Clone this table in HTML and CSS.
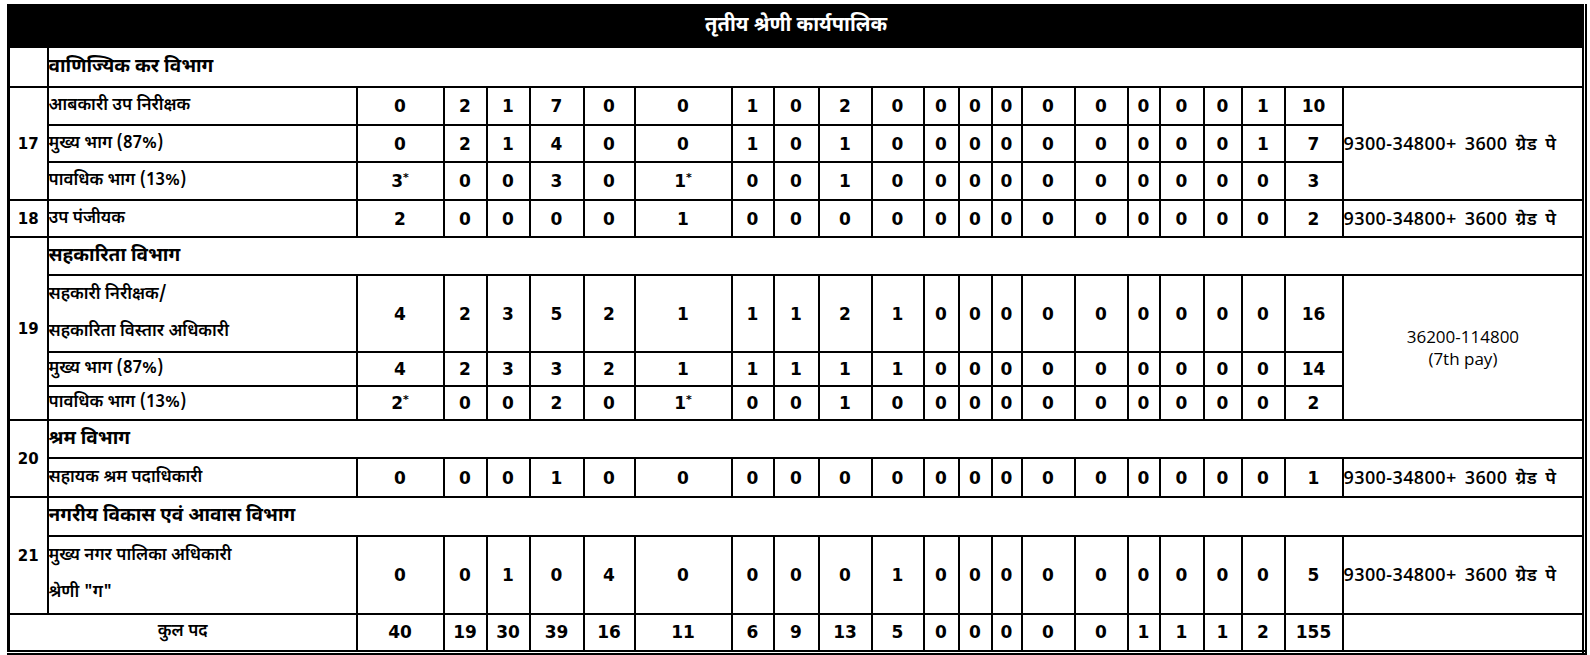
FILE: index.html
```html
<!DOCTYPE html>
<html lang="hi">
<head>
<meta charset="utf-8">
<title>तृतीय श्रेणी कार्यपालिक</title>
<link rel="stylesheet" href="styles.css">
</head>
<body>
<div class="page">
<table class="sheet">
<colgroup>
<col class="k-sno"><col class="k-name">
<col class="k1"><col class="k2"><col class="k3"><col class="k4"><col class="k5"><col class="k6"><col class="k7"><col class="k8"><col class="k9"><col class="k10">
<col class="k11"><col class="k12"><col class="k13"><col class="k14"><col class="k15"><col class="k16"><col class="k17"><col class="k18"><col class="k19"><col class="k20">
<col class="k-pay">
</colgroup>
<tbody>
<tr class="r-title"><td colspan="23" class="title">तृतीय श्रेणी कार्यपालिक</td></tr>

<tr class="r40"><td class="sno"></td><td colspan="22" class="dept">वाणिज्यिक कर विभाग</td></tr>

<tr class="r38"><td class="sno" rowspan="3">17</td><td class="name">आबकारी उप निरीक्षक</td>
<td class="n">0</td><td class="n">2</td><td class="n">1</td><td class="n">7</td><td class="n">0</td><td class="n">0</td><td class="n">1</td><td class="n">0</td><td class="n">2</td><td class="n">0</td><td class="n">0</td><td class="n">0</td><td class="n">0</td><td class="n">0</td><td class="n">0</td><td class="n">0</td><td class="n">0</td><td class="n">0</td><td class="n">1</td><td class="n">10</td>
<td class="pay" rowspan="3">9300-34800+ 3600 ग्रेड पे</td></tr>
<tr class="r37"><td class="name">मुख्य भाग (87%)</td>
<td class="n">0</td><td class="n">2</td><td class="n">1</td><td class="n">4</td><td class="n">0</td><td class="n">0</td><td class="n">1</td><td class="n">0</td><td class="n">1</td><td class="n">0</td><td class="n">0</td><td class="n">0</td><td class="n">0</td><td class="n">0</td><td class="n">0</td><td class="n">0</td><td class="n">0</td><td class="n">0</td><td class="n">1</td><td class="n">7</td></tr>
<tr class="r38"><td class="name">पावधिक भाग (13%)</td>
<td class="n">3<span class="star">*</span></td><td class="n">0</td><td class="n">0</td><td class="n">3</td><td class="n">0</td><td class="n">1<span class="star">*</span></td><td class="n">0</td><td class="n">0</td><td class="n">1</td><td class="n">0</td><td class="n">0</td><td class="n">0</td><td class="n">0</td><td class="n">0</td><td class="n">0</td><td class="n">0</td><td class="n">0</td><td class="n">0</td><td class="n">0</td><td class="n">3</td></tr>

<tr class="r37"><td class="sno">18</td><td class="name">उप पंजीयक</td>
<td class="n">2</td><td class="n">0</td><td class="n">0</td><td class="n">0</td><td class="n">0</td><td class="n">1</td><td class="n">0</td><td class="n">0</td><td class="n">0</td><td class="n">0</td><td class="n">0</td><td class="n">0</td><td class="n">0</td><td class="n">0</td><td class="n">0</td><td class="n">0</td><td class="n">0</td><td class="n">0</td><td class="n">0</td><td class="n">2</td>
<td class="pay">9300-34800+ 3600 ग्रेड पे</td></tr>

<tr class="r38"><td class="sno" rowspan="4">19</td><td colspan="22" class="dept">सहकारिता विभाग</td></tr>
<tr class="r77"><td class="name two">सहकारी निरीक्षक/<br>सहकारिता विस्तार अधिकारी</td>
<td class="n">4</td><td class="n">2</td><td class="n">3</td><td class="n">5</td><td class="n">2</td><td class="n">1</td><td class="n">1</td><td class="n">1</td><td class="n">2</td><td class="n">1</td><td class="n">0</td><td class="n">0</td><td class="n">0</td><td class="n">0</td><td class="n">0</td><td class="n">0</td><td class="n">0</td><td class="n">0</td><td class="n">0</td><td class="n">16</td>
<td class="pay center" rowspan="3">36200-114800<br>(7th pay)</td></tr>
<tr class="r34"><td class="name">मुख्य भाग (87%)</td>
<td class="n">4</td><td class="n">2</td><td class="n">3</td><td class="n">3</td><td class="n">2</td><td class="n">1</td><td class="n">1</td><td class="n">1</td><td class="n">1</td><td class="n">1</td><td class="n">0</td><td class="n">0</td><td class="n">0</td><td class="n">0</td><td class="n">0</td><td class="n">0</td><td class="n">0</td><td class="n">0</td><td class="n">0</td><td class="n">14</td></tr>
<tr class="r34"><td class="name">पावधिक भाग (13%)</td>
<td class="n">2<span class="star">*</span></td><td class="n">0</td><td class="n">0</td><td class="n">2</td><td class="n">0</td><td class="n">1<span class="star">*</span></td><td class="n">0</td><td class="n">0</td><td class="n">1</td><td class="n">0</td><td class="n">0</td><td class="n">0</td><td class="n">0</td><td class="n">0</td><td class="n">0</td><td class="n">0</td><td class="n">0</td><td class="n">0</td><td class="n">0</td><td class="n">2</td></tr>

<tr class="r38"><td class="sno" rowspan="2">20</td><td colspan="22" class="dept">श्रम विभाग</td></tr>
<tr class="r39"><td class="name">सहायक श्रम पदाधिकारी</td>
<td class="n">0</td><td class="n">0</td><td class="n">0</td><td class="n">1</td><td class="n">0</td><td class="n">0</td><td class="n">0</td><td class="n">0</td><td class="n">0</td><td class="n">0</td><td class="n">0</td><td class="n">0</td><td class="n">0</td><td class="n">0</td><td class="n">0</td><td class="n">0</td><td class="n">0</td><td class="n">0</td><td class="n">0</td><td class="n">1</td>
<td class="pay">9300-34800+ 3600 ग्रेड पे</td></tr>

<tr class="r39"><td class="sno" rowspan="2">21</td><td colspan="22" class="dept">नगरीय विकास एवं आवास विभाग</td></tr>
<tr class="r78"><td class="name two">मुख्य नगर पालिका अधिकारी<br>श्रेणी "ग"</td>
<td class="n">0</td><td class="n">0</td><td class="n">1</td><td class="n">0</td><td class="n">4</td><td class="n">0</td><td class="n">0</td><td class="n">0</td><td class="n">0</td><td class="n">1</td><td class="n">0</td><td class="n">0</td><td class="n">0</td><td class="n">0</td><td class="n">0</td><td class="n">0</td><td class="n">0</td><td class="n">0</td><td class="n">0</td><td class="n">5</td>
<td class="pay">9300-34800+ 3600 ग्रेड पे</td></tr>

<tr class="r38"><td colspan="2" class="total-label">कुल पद</td>
<td class="n">40</td><td class="n">19</td><td class="n">30</td><td class="n">39</td><td class="n">16</td><td class="n">11</td><td class="n">6</td><td class="n">9</td><td class="n">13</td><td class="n">5</td><td class="n">0</td><td class="n">0</td><td class="n">0</td><td class="n">0</td><td class="n">0</td><td class="n">1</td><td class="n">1</td><td class="n">1</td><td class="n">2</td><td class="n">155</td>
<td class="pay"></td></tr>
</tbody>
</table>
</div>
</body>
</html>
```

FILE: styles.css
```css
html, body {
  margin: 0;
  padding: 0;
  background: #ffffff;
}

.page {
  padding: 4px 0 0 7px;
}

.sheet {
  border-collapse: collapse;
  table-layout: fixed;
  width: 1576px;
  color: #000;
  font-family: "Noto Sans Devanagari", "Lohit Devanagari", "FreeSans", "Noto Sans", sans-serif;
  border-left: 3px solid #000;
  border-right: 5px double #000;
  border-bottom: 5px double #000;
}

.sheet td {
  border: 2px solid #000;
  padding: 0;
  overflow: hidden;
  white-space: nowrap;
}

/* column widths */
.k-sno { width: 39px; }
.k-name { width: 309px; }
.k1 { width: 87px; }
.k2 { width: 43px; }
.k3 { width: 43px; }
.k4 { width: 54px; }
.k5 { width: 51px; }
.k6 { width: 97px; }
.k7 { width: 42px; }
.k8 { width: 45px; }
.k9 { width: 53px; }
.k10 { width: 52px; }
.k11 { width: 35px; }
.k12 { width: 33px; }
.k13 { width: 30px; }
.k14 { width: 53px; }
.k15 { width: 53px; }
.k16 { width: 32px; }
.k17 { width: 44px; }
.k18 { width: 38px; }
.k19 { width: 43px; }
.k20 { width: 58px; }
.k-pay { width: 242px; }

/* row heights */
.r-title { height: 42px; }
.r34 { height: 34px; }
.r37 { height: 37px; }
.r38 { height: 38px; }
.r39 { height: 39px; }
.r40 { height: 40px; }
.r77 { height: 77px; }
.r78 { height: 78px; }

.title {
  background: #000;
  color: #fff;
  text-align: center;
  font-size: 20px;
  font-weight: 700;
  padding-right: 90px;
}

.dept {
  font-size: 19px;
  font-weight: 700;
  padding-left: 4px;
  vertical-align: middle;
}

.name {
  font-size: 17px;
  font-weight: 600;
  padding-left: 4px;
}

.name.two {
  line-height: 37px;
}

.sno {
  font-family: "DejaVu Sans", sans-serif;
  font-weight: 700;
  font-size: 15px;
  text-align: center;
}

.n {
  font-family: "DejaVu Sans", sans-serif;
  font-weight: 700;
  font-size: 17px;
  text-align: center;
}

.star {
  font-size: 11px;
  vertical-align: 6px;
}

.pay {
  font-family: "Open Sans", "Noto Sans Devanagari", "FreeSans", sans-serif;
  font-size: 18px;
  font-weight: 600;
  word-spacing: 3px;
  letter-spacing: 0.4px;
  padding-left: 2px;
}

.pay.center {
  text-align: center;
  font-size: 17px;
  font-weight: 400;
  line-height: 22px;
  word-spacing: 0;
  letter-spacing: 0;
}

.total-label {
  text-align: center;
  font-size: 17px;
  font-weight: 600;
}
```
